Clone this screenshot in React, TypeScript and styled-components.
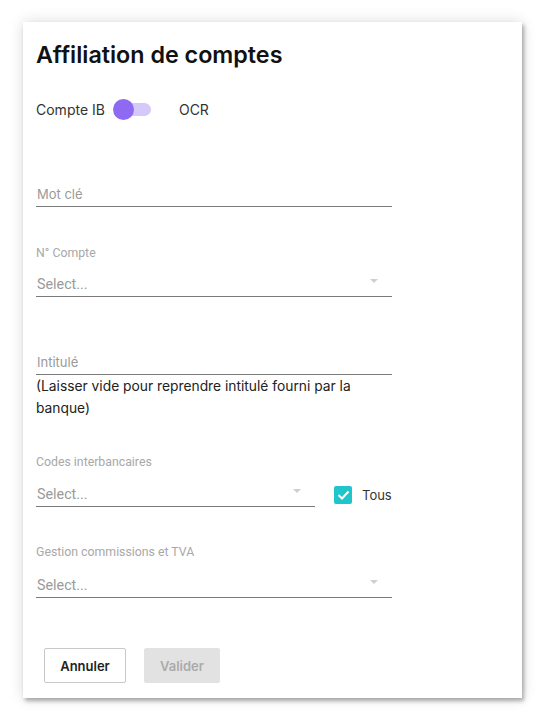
import React from "react";
import styled, { createGlobalStyle } from "styled-components";

const Global = createGlobalStyle`
  html, body { margin: 0; padding: 0; background: #ffffff; }
  body { font-family: Inter, "Noto Sans", sans-serif; }
  * { box-sizing: border-box; }
`;

const Page = styled.div`
  padding: 22px 0 0 23px;
  width: 543px;
  height: 716px;
`;

const Card = styled.div`
  width: 499px;
  height: 676px;
  background: #fff;
  padding: 18px 13px 15px 13px;
  box-shadow: 2px 3px 4px rgba(0, 0, 0, 0.3), 0 0 14px rgba(0, 0, 0, 0.14);
  display: flex;
  flex-direction: column;
`;

const Title = styled.h1`
  margin: 0;
  font-family: Inter, sans-serif;
  font-size: 23.3px;
  font-weight: 600;
  line-height: 30px;
  color: #111;
`;

const ToggleRow = styled.div`
  margin-top: 30px;
  height: 20px;
  display: flex;
  align-items: center;
  font-size: 14px;
  color: #333;
`;

const Track = styled.span`
  position: relative;
  display: inline-block;
  width: 36px;
  height: 13px;
  border-radius: 7px;
  background: #d5c8fb;
  margin-left: 10px;
  margin-right: 28px;
`;

const Knob = styled.span`
  position: absolute;
  left: -2px;
  top: -4px;
  width: 21px;
  height: 21px;
  border-radius: 50%;
  background: #8d6af1;
`;

const Field = styled.div<{ $mt: number; $w?: number }>`
  margin-top: ${(p) => p.$mt}px;
  width: ${(p) => p.$w ?? 356}px;
`;

const Label = styled.div`
  font-family: Roboto, sans-serif;
  font-size: 12.3px;
  line-height: 15px;
  color: #a8a8a8;
`;

const Input = styled.div<{ $gap?: number; $font?: string }>`
  margin-top: ${(p) => p.$gap ?? 0}px;
  height: 26px;
  border-bottom: 1px solid #7a7a7a;
  display: flex;
  align-items: center;
  padding: 0 0 0 1px;
  font-family: ${(p) => p.$font ?? "Roboto, sans-serif"};
  font-size: ${(p) => (p.$font ? 13 : 14.3)}px;
  color: #9a9a9a;
  justify-content: space-between;
`;

const Caret = styled.span`
  width: 0;
  height: 0;
  border-left: 4px solid transparent;
  border-right: 4px solid transparent;
  border-top: 4px solid #cfcfcf;
  margin-right: 14px;
  margin-top: -6px;
`;

const Helper = styled.div`
  font-size: 13.8px;
  line-height: 22px;
  color: #222;
  width: 356px;
`;

const Row = styled.div`
  display: flex;
  align-items: flex-end;
`;

const CheckWrap = styled.label`
  display: flex;
  align-items: center;
  margin-left: 19px;
  margin-bottom: 3px;
  font-size: 13px;
  color: #333;
  gap: 10px;
`;

const Box = styled.span`
  width: 18px;
  height: 18px;
  border-radius: 2px;
  background: #1fc5cb;
  display: flex;
  align-items: center;
  justify-content: center;
`;

const Buttons = styled.div`
  margin-top: 50px;
  margin-left: 8px;
  display: flex;
  gap: 18px;
`;

const Button = styled.button<{ $disabled?: boolean }>`
  height: 35px;
  padding: 0;
  width: ${(p) => (p.$disabled ? 76 : 82)}px;
  font-family: Inter, sans-serif;
  font-size: 13px;
  font-weight: 600;
  border-radius: 2px;
  border: 1px solid ${(p) => (p.$disabled ? "#e2e2e2" : "#c8c8c8")};
  background: ${(p) => (p.$disabled ? "#e2e2e2" : "#fff")};
  color: ${(p) => (p.$disabled ? "#ababab" : "#222")};
`;

export default function App() {
  return (
    <>
      <Global />
      <Page>
        <Card>
          <Title>Affiliation de comptes</Title>
          <ToggleRow>
            Compte IB
            <Track>
              <Knob />
            </Track>
            OCR
          </ToggleRow>

          <Field $mt={62}>
            <Input $font="Inter, sans-serif">Mot clé</Input>
          </Field>

          <Field $mt={39}>
            <Label>N° Compte</Label>
            <Input $gap={10}>
              Select...
              <Caret />
            </Input>
          </Field>

          <Field $mt={52}>
            <Input $font="Inter, sans-serif">Intitulé</Input>
            <Helper>(Laisser vide pour reprendre intitulé fourni par la banque)</Helper>
          </Field>

          <Field $mt={36} $w={356}>
            <Label>Codes interbancaires</Label>
            <Row>
              <Field $mt={11} $w={279}>
                <Input>
                  Select...
                  <Caret />
                </Input>
              </Field>
              <CheckWrap>
                <Box>
                  <svg width="13" height="10" viewBox="0 0 13 10">
                    <path d="M1.5 5 L5 8.5 L11.5 1.5" stroke="#fff" strokeWidth="2" fill="none" />
                  </svg>
                </Box>
                Tous
              </CheckWrap>
            </Row>
          </Field>

          <Field $mt={38}>
            <Label>Gestion commissions et TVA</Label>
            <Input $gap={12}>
              Select...
              <Caret />
            </Input>
          </Field>

          <Buttons>
            <Button>Annuler</Button>
            <Button $disabled>Valider</Button>
          </Buttons>
        </Card>
      </Page>
    </>
  );
}
